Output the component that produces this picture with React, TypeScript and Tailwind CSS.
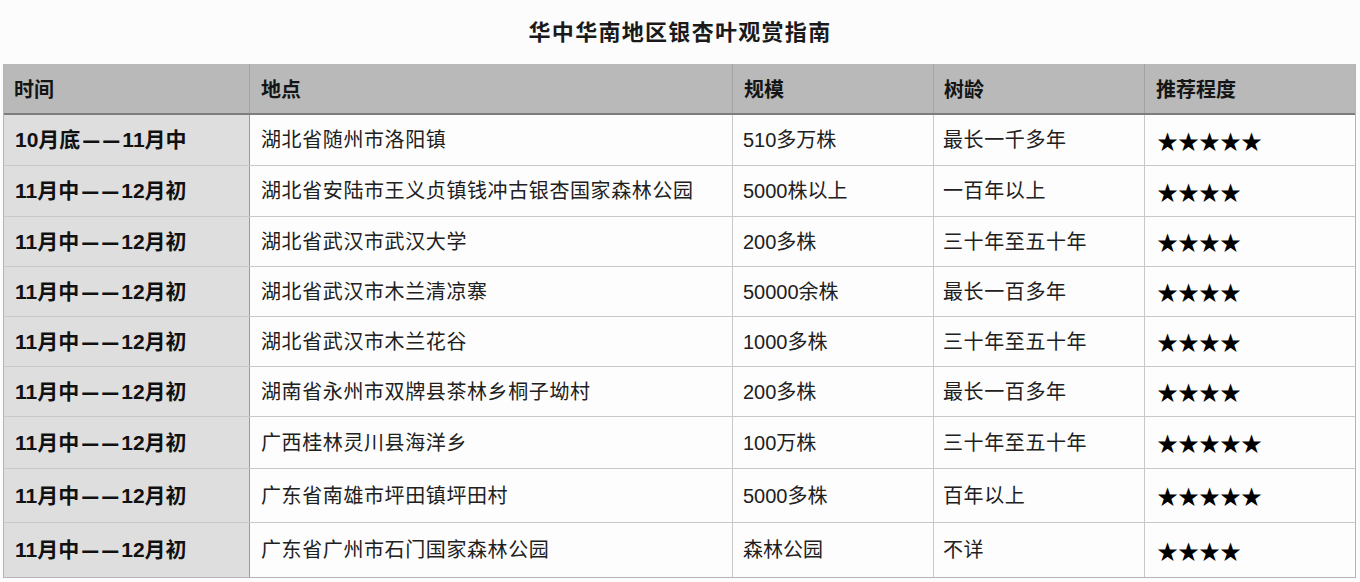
import React from "react";

const rows: [string, string, string, string, string, number, number][] = [
  ["10月底", "11月中", "湖北省随州市洛阳镇", "510多万株", "最长一千多年", 5, 50],
  ["11月中", "12月初", "湖北省安陆市王义贞镇钱冲古银杏国家森林公园", "5000株以上", "一百年以上", 4, 51],
  ["11月中", "12月初", "湖北省武汉市武汉大学", "200多株", "三十年至五十年", 4, 50],
  ["11月中", "12月初", "湖北省武汉市木兰清凉寨", "50000余株", "最长一百多年", 4, 50],
  ["11月中", "12月初", "湖北省武汉市木兰花谷", "1000多株", "三十年至五十年", 4, 50],
  ["11月中", "12月初", "湖南省永州市双牌县茶林乡桐子坳村", "200多株", "最长一百多年", 4, 50],
  ["11月中", "12月初", "广西桂林灵川县海洋乡", "100万株", "三十年至五十年", 5, 52],
  ["11月中", "12月初", "广东省南雄市坪田镇坪田村", "5000多株", "百年以上", 5, 54],
  ["11月中", "12月初", "广东省广州市石门国家森林公园", "森林公园", "不详", 4, 55],
];

const font = { fontFamily: '"Liberation Sans", "Noto Sans CJK SC", sans-serif' };
const cjk = { fontFamily: '"Noto Sans CJK SC", "Noto Sans", sans-serif' };

export default function App() {
  return (
    <div className="w-[1360px] h-[582px] bg-[#fcfcfd] overflow-hidden" style={font}>
      <div className="h-[64px] flex items-center justify-center pb-[4px]">
        <h1 className="text-[22px] font-bold text-[#1a1a1a] tracking-[1.3px]" style={cjk}>华中华南地区银杏叶观赏指南</h1>
      </div>
      <div className="ml-[3px] w-[1353px] border-x border-b border-[#b5b5b5]">
        <div className="grid grid-cols-[245px_483px_201px_211px_1fr] h-[51px] bg-[#b9b9b9] border-b-2 border-[#7d7d7d] text-[20px] font-bold text-[#151515]" style={cjk}>
          <div className="flex items-center pl-[10px]">时间</div>
          <div className="flex items-center pl-[11px] border-l border-[#a3a3a3]">地点</div>
          <div className="flex items-center pl-[11px] border-l border-[#a3a3a3]">规模</div>
          <div className="flex items-center pl-[10px] border-l border-[#a3a3a3]">树龄</div>
          <div className="flex items-center pl-[11px] border-l border-[#a3a3a3]">推荐程度</div>
        </div>
        {rows.map((r, i) => (
          <div
            key={i}
            className={`grid grid-cols-[245px_483px_201px_211px_1fr] text-[20px] text-[#202020] ${i > 0 ? "border-t border-[#c9c9c9]" : ""}`}
            style={{ height: r[6] }}
          >
            <div className="flex items-center pl-[11px] bg-[#dedede] font-bold text-[#111] text-[21px]">
              <span>{r[0]}</span>
              <span className="text-[16px] tracking-[4px] ml-[3px] mr-[-1px] scale-y-150 font-bold">——</span>
              <span>{r[1]}</span>
            </div>
            <div className="flex items-center pl-[11px] border-l border-[#9a9a9a] bg-[#fdfdfd] tracking-[0.6px]">{r[2]}</div>
            <div className="flex items-center pl-[10px] border-l border-[#c9c9c9] bg-[#fdfdfd]">{r[3]}</div>
            <div className="flex items-center pl-[9px] border-l border-[#c9c9c9] bg-[#fdfdfd] tracking-[0.6px]">{r[4]}</div>
            <div className="flex items-center pl-[12px] border-l border-[#c9c9c9] bg-[#fdfdfd] text-[#000] text-[21px] leading-none" style={cjk}>
              {"★".repeat(r[5])}
            </div>
          </div>
        ))}
      </div>
    </div>
  );
}
